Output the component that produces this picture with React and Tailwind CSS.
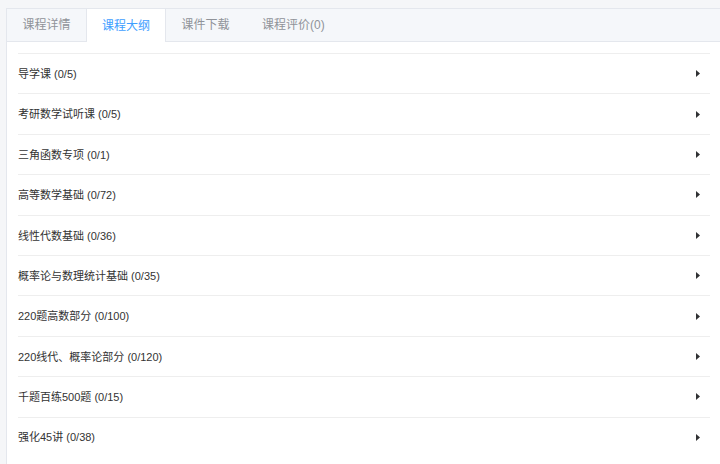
import React from 'react';

const tabs = ['课程详情', '课程大纲', '课件下载', '课程评价(0)'];

const chapters = [
  '导学课 (0/5)',
  '考研数学试听课 (0/5)',
  '三角函数专项 (0/1)',
  '高等数学基础 (0/72)',
  '线性代数基础 (0/36)',
  '概率论与数理统计基础 (0/35)',
  '220题高数部分 (0/100)',
  '220线代、概率论部分 (0/120)',
  '千题百练500题 (0/15)',
  '强化45讲 (0/38)',
];

function App() {
  return (
    <div
      className="w-[720px] h-[464px] overflow-hidden bg-[#f5f6f8] pt-2 pl-[6px]"
      style={{ fontFamily: '"Liberation Sans", "Noto Sans CJK SC", sans-serif' }}
    >
      <div className="h-full bg-white border-l border-t border-[#e4e7ed]">
        <div className="flex h-[33px] bg-[#f5f7fa] border-b border-[#e4e7ed]">
          {tabs.map((t, i) => (
            <div
              key={t}
              className={
                i === 1
                  ? 'w-[80px] -mb-px flex items-center justify-center bg-white border-l border-r border-[#e4e7ed] text-[12px] text-[#409eff]'
                  : i === 3
                  ? 'px-[17px] flex items-center justify-center text-[12px] text-[#909399]'
                  : i === 0
                  ? 'w-[79px] flex items-center justify-center text-[12px] text-[#909399]'
                  : 'w-[79px] flex items-center justify-center text-[12px] text-[#909399]'
              }
            >
              {t}
            </div>
          ))}
        </div>
        <div className="pl-[11px] pr-[10px] pt-[11px]">
          {chapters.map((c) => (
            <div
              key={c}
              className="h-[40.4px] border-t border-[#eeeeee] flex items-center justify-between"
            >
              <span className="text-[11px] text-[#333333] pt-px">{c}</span>
              <svg width="4" height="7" viewBox="0 0 4 7" className="mr-[10px]">
                <path d="M0 0 L4 3.5 L0 7 Z" fill="#303133" />
              </svg>
            </div>
          ))}
        </div>
      </div>
    </div>
  );
}

export default App;
